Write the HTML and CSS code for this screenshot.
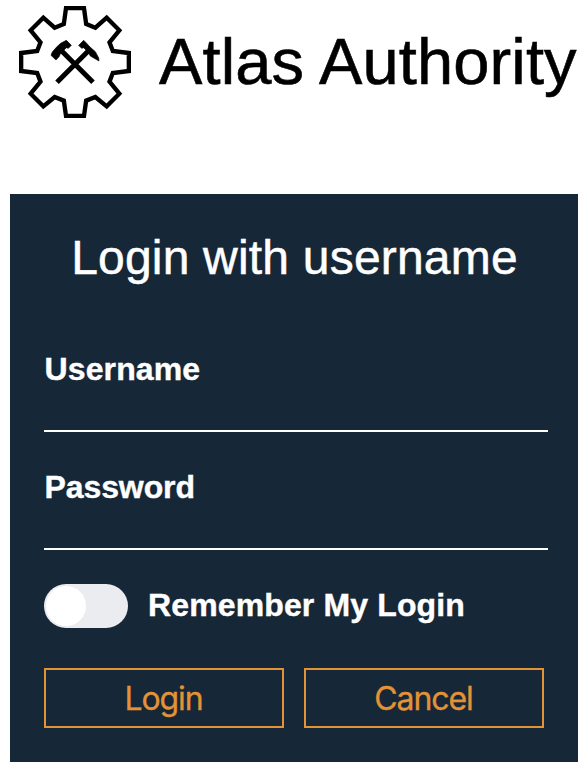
FILE: index.html
```html
<!DOCTYPE html>
<html lang="en">
<head>
<meta charset="utf-8">
<title>Atlas Authority</title>
<link rel="stylesheet" href="styles.css">
</head>
<body>
<header class="brand">
  <svg class="logo" viewBox="27 18 336 336" aria-hidden="true">
    <path class="gear" d="M168 24.500H222L228.500 72L256 83L290 53L328 91L298.500 127L308.500 153L356.500 159V213L308.500 219L298.500 245L328 281L290 319L256 291L228.500 302L222 347.500H168L161.500 302L134 291L100 319L62 281L91.500 245L81.500 219L33.500 213V159L81.500 153L91.500 127L62 91L100 53L134 83L161.500 72Z"/>
    <path class="handle" d="M156 154L249 247M234 154L141 247"/>
    <path class="head" d="M169 121L184 136L175 145L169 143L151 161L148 169L138 180L123 166L127 156L139 142L152 130Z"/>
    <path class="head" d="M221 121L206 136L215 145L221 143L235 157L241 168L267 183L266 174L256 155L240 141L229 129Z"/>
  </svg>
  <h1 class="name">Atlas Authority</h1>
</header>
<main class="panel">
  <h2 class="title">Login with username</h2>
  <form class="form">
    <div class="field">
      <label for="username">Username</label>
      <input id="username" type="text">
    </div>
    <div class="field">
      <label class="tight" for="password">Password</label>
      <input id="password" type="password">
    </div>
    <label class="remember">
      <input class="toggle" type="checkbox">
      <span>Remember My Login</span>
    </label>
    <div class="actions">
      <button type="button">Login</button>
      <button type="button">Cancel</button>
    </div>
  </form>
</main>
</body>
</html>
```
FILE: styles.css
```css
* { box-sizing: border-box; }

body {
  margin: 0;
  padding: 6px 10px 12px;
  background: #fff;
  font-family: "Liberation Sans", Arial, sans-serif;
}

.brand {
  display: flex;
  align-items: center;
  gap: 28px;
  height: 112px;
  padding-left: 9px;
  margin-bottom: 76px;
}

.logo { width: 112px; height: 112px; flex: none; }
.gear { fill: none; stroke: #000; stroke-width: 13; }
.handle { fill: none; stroke: #000; stroke-width: 15; }
.head { stroke: #000; stroke-width: 2; }

.name {
  margin: 0;
  font-size: 65px;
  line-height: 76px;
  font-weight: 400;
  letter-spacing: 0.15px;
  white-space: nowrap;
  color: #000;
  -webkit-text-stroke: 0.6px;
}

.panel {
  height: 568px;
  padding: 35px 30px 34px 34px;
  background: #162838;
  color: #fff;
}

.title {
  margin: 0 0 0 -3px;
  font-size: 48px;
  line-height: 58px;
  font-weight: 400;
  letter-spacing: 0.2px;
  text-align: center;
  white-space: nowrap;
  -webkit-text-stroke: 0.5px;
}

.form { margin-top: 63px; }

.field {
  display: flex;
  flex-direction: column;
  height: 118px;
}

.field label, .remember {
  font-size: 32px;
  line-height: 38px;
  font-weight: 700;
  letter-spacing: 0.13px;
  -webkit-text-stroke: 0.4px;
}

.field label { padding-left: 0.500px; }
.field .tight { letter-spacing: -0.1px; }

.field input {
  height: 44px;
  padding: 0;
  border: 0;
  border-bottom: 2px solid #fff;
  background: transparent;
  color: #fff;
  font: inherit;
  outline: 0;
}

.remember {
  display: flex;
  align-items: center;
  gap: 20px;
  height: 44px;
  margin-top: -2px;
  margin-bottom: 40px;
}

.remember span { padding-bottom: 2px; }

.toggle {
  appearance: none;
  display: flex;
  align-items: center;
  width: 84px;
  height: 44px;
  margin: 0;
  padding: 2px;
  border-radius: 22px;
  background: #ebecf0;
}

.toggle::before {
  content: "";
  width: 40px;
  height: 40px;
  border-radius: 50%;
  background: #fff;
}

.actions { display: flex; gap: 20px; }

.actions button {
  width: 240px;
  height: 60px;
  padding: 2px 1px 0 0;
  border: 2px solid #e39335;
  background: transparent;
  color: #e39335;
  font-family: Inter, sans-serif;
  font-size: 32px;
  line-height: 38px;
  letter-spacing: -1.100px;
  -webkit-text-stroke: 0.3px;
}
```
